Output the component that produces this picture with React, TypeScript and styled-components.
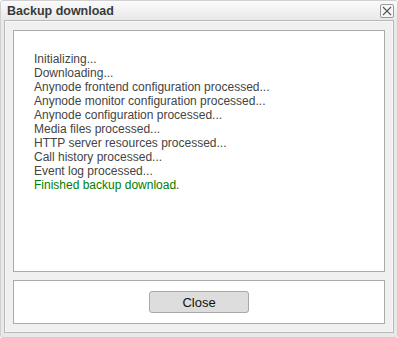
import React from "react";
import styled, { createGlobalStyle } from "styled-components";

const GlobalStyle = createGlobalStyle`
  html, body {
    margin: 0;
    padding: 0;
    background: #ffffff;
  }
`;

const Dialog = styled.div`
  box-sizing: border-box;
  width: 398px;
  height: 338px;
  display: flex;
  flex-direction: column;
  border: 1px solid #d0d0d0;
  border-radius: 3px;
  background: #e9e9e9;
  font-family: "Liberation Sans", Arial, sans-serif;
  overflow: hidden;
`;

const TitleBar = styled.div`
  height: 19px;
  display: flex;
  align-items: center;
  justify-content: space-between;
  padding: 0 3px 0 6px;
  background: linear-gradient(#fbfbfb, #e8e8e8);
`;

const Title = styled.span`
  font-size: 12.5px;
  font-weight: bold;
  color: #3a3a3a;
`;

const CloseIcon = styled.button`
  box-sizing: border-box;
  width: 14px;
  height: 14px;
  padding: 0;
  margin-top: 1px;
  display: flex;
  align-items: center;
  justify-content: center;
  border: 1px solid #9a9a9a;
  border-radius: 2px;
  background: #f7f7f7;
`;

const Panel = styled.div`
  flex: 1;
  display: flex;
  flex-direction: column;
  gap: 8px;
  margin: 0 3px 4px 3px;
  padding: 9px 8px 8px 8px;
  border: 1px solid #b9b9b9;
  box-shadow: inset 0 0 0 1px #f7f7f7;
  background: #f0f0f0;
`;

const LogBox = styled.div`
  flex: 1;
  padding: 21px 20px;
  border: 1px solid #aaaaaa;
  background: #ffffff;
  font-size: 12px;
  line-height: 14px;
  color: #444444;
`;

const LogLine = styled.div<{ $ok?: boolean }>`
  color: ${(p) => (p.$ok ? "#008000" : "#444444")};
`;

const Dot = styled.span`
  color: #444444;
`;

const ButtonBar = styled.div`
  box-sizing: border-box;
  height: 44px;
  display: flex;
  justify-content: center;
  padding-top: 10px;
  border: 1px solid #aaaaaa;
  background: #ffffff;
`;

const Button = styled.button`
  box-sizing: border-box;
  width: 100px;
  height: 22px;
  padding: 0;
  border: 1px solid #a8a8a8;
  border-radius: 3px;
  background: #dddddd;
  font-family: "Liberation Sans", Arial, sans-serif;
  font-size: 13px;
  color: #111111;
`;

const lines = [
  "Initializing...",
  "Downloading...",
  "Anynode frontend configuration processed...",
  "Anynode monitor configuration processed...",
  "Anynode configuration processed...",
  "Media files processed...",
  "HTTP server resources processed...",
  "Call history processed...",
  "Event log processed...",
];

export default function App() {
  return (
    <>
      <GlobalStyle />
      <Dialog>
        <TitleBar>
          <Title>Backup download</Title>
          <CloseIcon aria-label="close">
            <svg width="10" height="10" viewBox="0 0 10 10">
              <path d="M1 1 L9 9 M9 1 L1 9" stroke="#555" strokeWidth="1.1" />
            </svg>
          </CloseIcon>
        </TitleBar>
        <Panel>
          <LogBox>
            {lines.map((l) => (
              <LogLine key={l}>{l}</LogLine>
            ))}
            <LogLine $ok>
              Finished backup download<Dot>.</Dot>
            </LogLine>
          </LogBox>
          <ButtonBar>
            <Button>Close</Button>
          </ButtonBar>
        </Panel>
      </Dialog>
    </>
  );
}
